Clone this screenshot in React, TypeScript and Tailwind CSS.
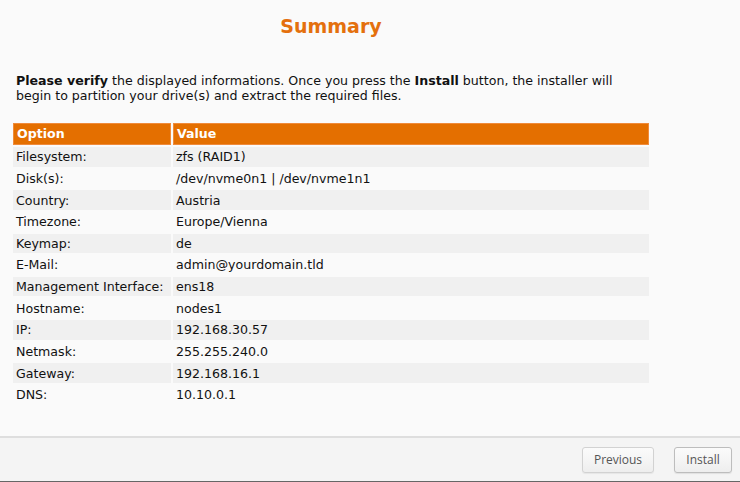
import React from "react";

const rows: [string, string][] = [
  ["Filesystem:", "zfs (RAID1)"],
  ["Disk(s):", "/dev/nvme0n1 | /dev/nvme1n1"],
  ["Country:", "Austria"],
  ["Timezone:", "Europe/Vienna"],
  ["Keymap:", "de"],
  ["E-Mail:", "admin@yourdomain.tld"],
  ["Management Interface:", "ens18"],
  ["Hostname:", "nodes1"],
  ["IP:", "192.168.30.57"],
  ["Netmask:", "255.255.240.0"],
  ["Gateway:", "192.168.16.1"],
  ["DNS:", "10.10.0.1"],
];

export default function App() {
  return (
    <div className="w-[740px] h-[482px] flex flex-col bg-[#fafafa] text-[#111] font-['DejaVu_Sans',sans-serif] overflow-hidden">
      <div className="flex-1 w-[662px]">
        <h1 className="text-center text-[19px] font-bold text-[#e4700d] pt-[14px] leading-[24px]">Summary</h1>
        <p className="mt-[35px] ml-[16px] text-[12.6px] leading-[15px] w-[630px]">
          <b>Please verify</b> the displayed informations. Once you press the <b>Install</b> button, the installer will begin to partition your drive(s) and extract the required files.
        </p>
        <table className="ml-[11px] mt-[18px] border-separate border-spacing-[2px] text-[12.6px] w-[640px]">
          <thead>
            <tr>
              <th className="w-[158px] h-[22px] bg-[#e46f00] border border-[#f08a3a] text-white text-left font-bold px-[3px] leading-[18px]">Option</th>
              <th className="h-[22px] bg-[#e46f00] border border-[#f08a3a] text-white text-left font-bold px-[3px] leading-[18px]">Value</th>
            </tr>
          </thead>
          <tbody>
            {rows.map(([k, v], i) => (
              <tr key={k} className={i % 2 === 0 ? "bg-[#f0f0f0]" : ""}>
                <td className="h-[19.64px] px-[3px] pt-[1px] pb-0 leading-[18px] whitespace-nowrap">{k}</td>
                <td className="h-[19.64px] px-[3px] pt-[1px] pb-0 leading-[18px]">{v}</td>
              </tr>
            ))}
          </tbody>
        </table>
      </div>
      <div className="h-[46px] border-t-2 border-[#dedede] border-b border-b-[#666] bg-[#f4f4f4] flex items-center justify-end gap-[20px] pr-[8px] font-['Open_Sans',sans-serif]">
        <button className="w-[72px] h-[26px] rounded-[3px] border border-[#d2d2d2] shadow-[0_1px_1px_rgba(0,0,0,0.06)] bg-gradient-to-b from-[#fbfbfb] to-[#eeeeee] text-[12px] font-medium text-[#555]">Previous</button>
        <button className="w-[58px] h-[26px] rounded-[3px] border border-[#bdbdbd] shadow-[0_1px_1px_rgba(0,0,0,0.08)] bg-gradient-to-b from-[#fbfbfb] to-[#eeeeee] text-[12px] font-medium text-[#555]">Install</button>
      </div>
    </div>
  );
}
